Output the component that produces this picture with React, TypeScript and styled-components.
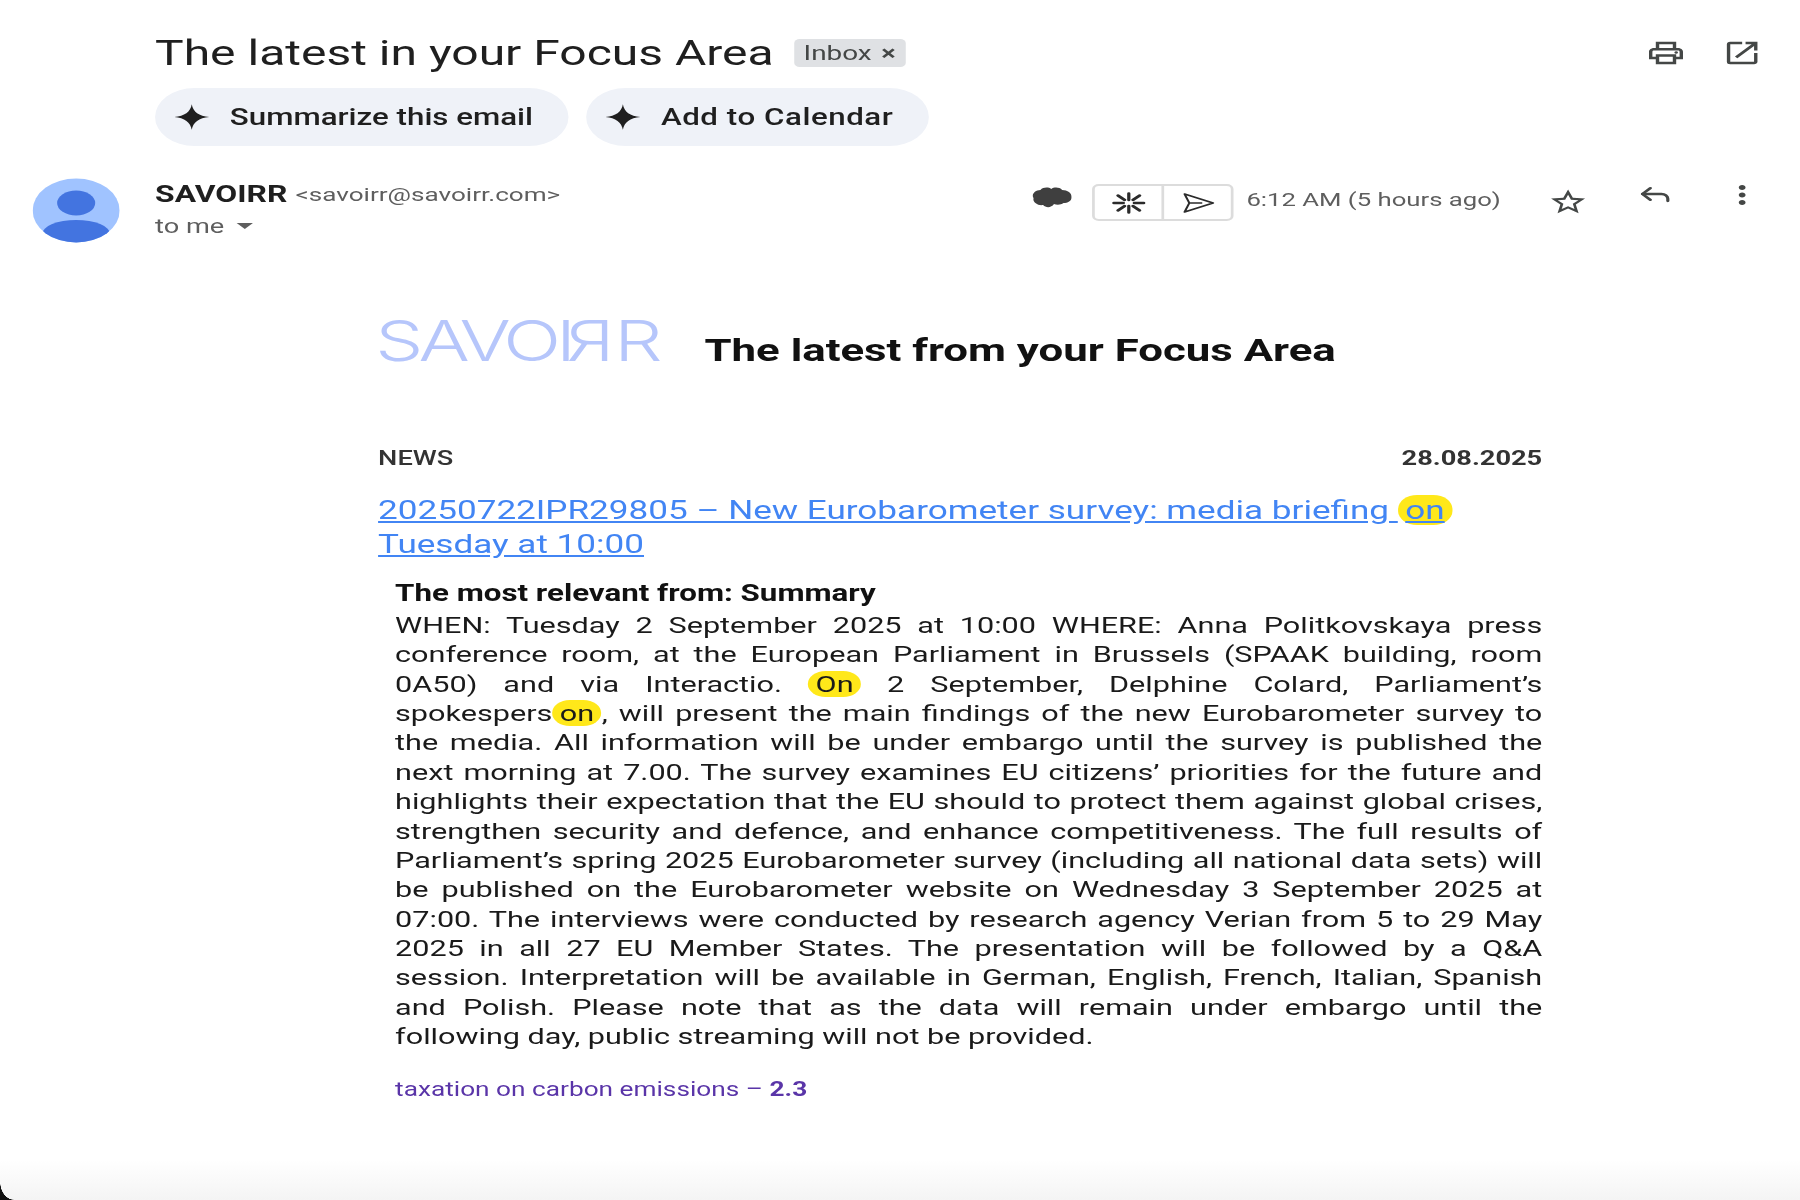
import { createGlobalStyle, styled } from "styled-components";
import {
  MdMoreVert,
  MdOpenInNew,
  MdOutlineLocalPrintshop,
  MdOutlineStarBorder,
} from "react-icons/md";
import { Reply } from "lucide-react";

// the whole capture is wider than it is tall, so the page is laid out narrow and stretched
const STRETCH = 1.36;

const GlobalStyle = createGlobalStyle`
  html, body {
    margin: 0;
    padding: 0;
    height: 1200px;
    overflow: hidden;
    background: #fff;
  }
`;

const Frame = styled.div`
  position: relative;
  width: 1800px;
  height: 1200px;
  overflow: hidden;
  background: #fff;
  filter: blur(0.4px);
`;

const Page = styled.div`
  width: ${1800 / STRETCH}px;
  height: 1200px;
  transform: scaleX(${STRETCH});
  transform-origin: 0 0;
  font-family: Roboto, "Liberation Sans", sans-serif;
  color: #1f1f1f;
`;

const SubjectRow = styled.div`
  display: flex;
  align-items: center;
  height: 58px;
  padding: 24px 0 0 114px;
`;

const Subject = styled.h1`
  margin: 0;
  font-size: 35.3px;
  font-weight: 400;
  line-height: 58px;
  white-space: nowrap;
  color: #1f1f1f;
`;

const Label = styled.span`
  display: flex;
  align-items: center;
  gap: 7px;
  height: 28px;
  margin-left: 15px;
  padding: 0 7px;
  border-radius: 4px;
  background: #dfe1e4;
  color: #444746;
  font-size: 20.5px;
`;

const LabelClose = styled.span`
  font-size: 20px;
  font-weight: 700;
`;

const TopIcons = styled.div`
  display: flex;
  gap: 26px;
  margin-left: auto;
  padding-right: 28px;
  color: #444746;
  font-size: 30px;
`;

const ActionRow = styled.div`
  display: flex;
  gap: 13px;
  margin-top: 6px;
  padding-left: 114px;
`;

const Pill = styled.button<{ $spacing?: number }>`
  display: flex;
  align-items: center;
  gap: 14px;
  height: 58px;
  padding: 0 26px 0 13px;
  border: 0;
  border-radius: 29px;
  background: #eff2f8;
  color: #1f1f1f;
  font-family: inherit;
  font-size: 23px;
  font-weight: 500;
  letter-spacing: ${(props) => props.$spacing ?? 0}px;
  white-space: nowrap;
`;

const SenderRow = styled.div`
  display: flex;
  align-items: flex-start;
  margin-top: 32px;
  padding-left: 24px;
`;

const Avatar = styled.svg`
  display: block;
  width: 64px;
  height: 65px;
  flex-shrink: 0;
`;

const SenderInfo = styled.div`
  margin-left: 26px;
`;

const SenderLine = styled.div`
  display: flex;
  align-items: center;
  gap: 6px;
  height: 32px;
  white-space: nowrap;
`;

const SenderName = styled.span`
  font-size: 23.4px;
  font-weight: 700;
  color: #1f1f1f;
`;

const SenderMail = styled.span`
  font-size: 19.2px;
  color: #5e5e5e;
`;

const ToMe = styled.span`
  font-size: 20px;
  color: #5e5e5e;
`;

const Caret = styled.span`
  width: 0;
  height: 0;
  margin-left: 3px;
  border-left: 6px solid transparent;
  border-right: 6px solid transparent;
  border-top: 6px solid #5e5e5e;
`;

const SenderMeta = styled.div`
  display: flex;
  align-items: flex-start;
  margin-left: auto;
  padding-right: 28px;
  color: #444746;
`;

const Cloud = styled.svg`
  display: block;
  width: 29px;
  height: 24px;
  margin: 8px 15px 0 0;
`;

const ToolGroup = styled.div`
  display: flex;
  height: 37px;
  margin-top: 6px;
  border: 2px solid #dcdcdc;
  border-radius: 5px;
  box-sizing: border-box;
`;

const ToolButton = styled.div`
  display: flex;
  align-items: center;
  justify-content: center;
  width: 49px;

  & + & {
    border-left: 2px solid #dcdcdc;
  }
`;

const ToolIcon = styled.svg`
  display: block;
  width: 26px;
  height: 22px;
`;

const Time = styled.span`
  margin: 7px 34px 0 9px;
  font-size: 18.9px;
  line-height: 30px;
  color: #5e5e5e;
  white-space: nowrap;
`;

const MetaIcon = styled.span<{ $top: number; $gap?: number }>`
  display: flex;
  margin-top: ${(props) => props.$top}px;
  margin-left: ${(props) => props.$gap ?? 0}px;
  font-size: 30px;
`;

const Content = styled.div`
  width: 856px;
  margin: 62px 0 0 278px;
`;

const Brand = styled.div`
  display: flex;
  align-items: center;
  gap: 60px;
  height: 90px;
`;

const LogoText = styled.div`
  display: flex;
  width: 182px;
  margin: -18px 0 0 -2px;
  font-family: Inter, Roboto, sans-serif;
  font-size: 56px;
  font-weight: 300;
  line-height: 60px;
  letter-spacing: -3.7px;
  color: #b6c6fb;
`;

const MirroredLetter = styled.span`
  display: inline-block;
  transform: scaleX(-1);
`;

const BrandTitle = styled.h2`
  margin: 0;
  font-size: 32.2px;
  font-weight: 700;
  white-space: nowrap;
  color: #111;
`;

const NewsHeader = styled.div`
  display: flex;
  justify-content: space-between;
  margin-top: 49px;
  font-size: 20px;
  font-weight: 500;
  line-height: 28px;
  color: #333;
`;

const NewsDate = styled.span`
  font-weight: 700;
`;

const ArticleLink = styled.a`
  display: block;
  margin-top: 22px;
  font-size: 25.8px;
  line-height: 33.5px;
  color: #4285f4;
  text-decoration: underline;
`;

const Mark = styled.mark`
  padding: 0 5.5px;
  border-radius: 14px;
  background: #ffe81a;
  color: inherit;
`;

const Summary = styled.div`
  margin: 16px 0 0 12.5px;
`;

const SummaryTitle = styled.div`
  font-size: 23px;
  font-weight: 700;
  line-height: 34px;
  color: #111;
`;

const BodyLine = styled.div<{ $last?: boolean }>`
  font-size: 22.5px;
  line-height: 29.36px;
  color: #1a1a1a;
  text-align: justify;
  text-align-last: ${(props) => (props.$last ? "left" : "justify")};
`;

const Topic = styled.div`
  margin-top: 24px;
  font-size: 19.3px;
  line-height: 30px;
  color: #5a35a8;
`;

const BottomShade = styled.div`
  position: absolute;
  left: 0;
  right: 0;
  bottom: 0;
  height: 40px;
  background: linear-gradient(#ffffff00, #f4f4f4);
`;

const WindowCorner = styled.div`
  position: absolute;
  left: 0;
  bottom: 0;
  width: 14px;
  height: 18px;
  background: radial-gradient(ellipse 14px 18px at 100% 0, #ffffff00 97%, #111 100%);
`;

function Sparkle() {
  return (
    <svg width="28" height="28" viewBox="0 0 24 24" fill="#1f1f1f">
      <path d="M12 1C12.8 7.5 16.5 11.2 23 12 16.5 12.8 12.8 16.5 12 23 11.2 16.5 7.5 12.8 1 12 7.5 11.2 11.2 7.5 12 1Z" />
    </svg>
  );
}

const bodyLines = [
  ["WHEN: Tuesday 2 September 2025 at 10:00 WHERE: Anna Politkovskaya press"],
  ["conference room, at the European Parliament in Brussels (SPAAK building, room"],
  ["0A50) and via Interactio. ", <Mark key="m1">On</Mark>, " 2 September, Delphine Colard, Parliament’s"],
  ["spokespers", <Mark key="m2">on</Mark>, ", will present the main findings of the new Eurobarometer survey to"],
  ["the media. All information will be under embargo until the survey is published the"],
  ["next morning at 7.00. The survey examines EU citizens’ priorities for the future and"],
  ["highlights their expectation that the EU should to protect them against global crises,"],
  ["strengthen security and defence, and enhance competitiveness. The full results of"],
  ["Parliament’s spring 2025 Eurobarometer survey (including all national data sets) will"],
  ["be published on the Eurobarometer website on Wednesday 3 September 2025 at"],
  ["07:00. The interviews were conducted by research agency Verian from 5 to 29 May"],
  ["2025 in all 27 EU Member States. The presentation will be followed by a Q&A"],
  ["session. Interpretation will be available in German, English, French, Italian, Spanish"],
  ["and Polish. Please note that as the data will remain under embargo until the"],
  ["following day, public streaming will not be provided."],
];

export default function App() {
  return (
    <Frame>
      <GlobalStyle />
      <Page>
        <SubjectRow>
          <Subject>The latest in your Focus Area</Subject>
          <Label>
            Inbox <LabelClose>×</LabelClose>
          </Label>
          <TopIcons>
            <MdOutlineLocalPrintshop />
            <MdOpenInNew />
          </TopIcons>
        </SubjectRow>

        <ActionRow>
          <Pill>
            <Sparkle />
            Summarize this email
          </Pill>
          <Pill $spacing={0.4}>
            <Sparkle />
            Add to Calendar
          </Pill>
        </ActionRow>

        <SenderRow>
          <Avatar viewBox="0 0 64 65">
            <defs>
              <clipPath id="avatar-clip">
                <circle cx="32" cy="32.5" r="32" />
              </clipPath>
            </defs>
            <g clipPath="url(#avatar-clip)">
              <rect width="64" height="65" fill="#a0c3ff" />
              <ellipse cx="32" cy="25" rx="14" ry="12.5" fill="#4374e0" />
              <ellipse cx="32" cy="56" rx="25" ry="14" fill="#4374e0" />
            </g>
          </Avatar>
          <SenderInfo>
            <SenderLine>
              <SenderName>SAVOIRR</SenderName>
              <SenderMail>&lt;savoirr@savoirr.com&gt;</SenderMail>
            </SenderLine>
            <SenderLine>
              <ToMe>to me</ToMe>
              <Caret />
            </SenderLine>
          </SenderInfo>
          <SenderMeta>
            <Cloud viewBox="0 0 29 24">
              <path
                fill="#3f3f3f"
                d="M6 4C8 1 12 1 14 3 16 1 20 1 22 4 26 4 29 7 29 11 29 15 26 17 23 17 21 19 18 19 16 18 14 22 10 22 8 19 4 20 0 16 1 12-1 9 2 4 6 4Z"
              />
            </Cloud>
            <ToolGroup>
              <ToolButton>
                <ToolIcon viewBox="0 0 26 22" stroke="#2b2b2b" strokeWidth="2.4" strokeLinecap="round">
                  <path d="M13 1.5V8M13 14V20.5M2 11H9M17 11H24M5 3.5L10 8M16 14L21 18.5M21 3.5L16 8M10 14L5 18.5" />
                </ToolIcon>
              </ToolButton>
              <ToolButton>
                <ToolIcon viewBox="0 0 26 22" fill="none" stroke="#2b2b2b" strokeWidth="1.6" strokeLinejoin="round">
                  <path d="M3 2L24 11 3 20 6.5 11ZM6.5 11H16" />
                </ToolIcon>
              </ToolButton>
            </ToolGroup>
            <Time>6:12 AM (5 hours ago)</Time>
            <MetaIcon $top={9}>
              <MdOutlineStarBorder />
            </MetaIcon>
            <MetaIcon $top={2} $gap={35}>
              <Reply size={28} strokeWidth={2} />
            </MetaIcon>
            <MetaIcon $top={2} $gap={35}>
              <MdMoreVert />
            </MetaIcon>
          </SenderMeta>
        </SenderRow>

        <Content>
          <Brand>
            <LogoText>
              SAVOI<MirroredLetter>R</MirroredLetter>R
            </LogoText>
            <BrandTitle>The latest from your Focus Area</BrandTitle>
          </Brand>

          <NewsHeader>
            <span>NEWS</span>
            <NewsDate>28.08.2025</NewsDate>
          </NewsHeader>

          <ArticleLink href="#">
            20250722IPR29805 – New Eurobarometer survey: media briefing <Mark>on</Mark>
            <br />
            Tuesday at 10:00
          </ArticleLink>

          <Summary>
            <SummaryTitle>The most relevant from: Summary</SummaryTitle>
            {bodyLines.map((line, index) => (
              <BodyLine key={index} $last={index === bodyLines.length - 1}>
                {line}
              </BodyLine>
            ))}
            <Topic>
              taxation on carbon emissions – <b>2.3</b>
            </Topic>
          </Summary>
        </Content>
      </Page>
      <BottomShade />
      <WindowCorner />
    </Frame>
  );
}
